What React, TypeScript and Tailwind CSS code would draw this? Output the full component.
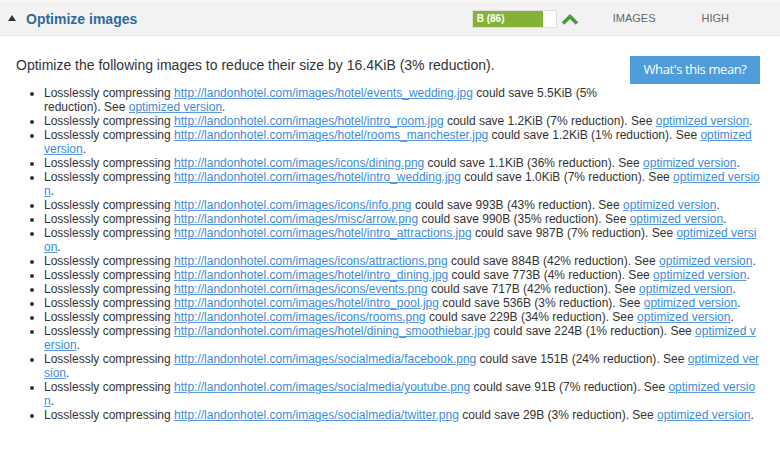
import React from 'react';

type Row = {
  url: string;
  save: string;
  cut?: number; // chars of "optimized version" on the first line
  textBreak?: boolean;
};

const LINK = 'optimized version';

const rows: Row[] = [
  { url: 'http://landonhotel.com/images/hotel/events_wedding.jpg', save: '5.5KiB (5% reduction)', textBreak: true },
  { url: 'http://landonhotel.com/images/hotel/intro_room.jpg', save: '1.2KiB (7% reduction)' },
  { url: 'http://landonhotel.com/images/hotel/rooms_manchester.jpg', save: '1.2KiB (1% reduction)', cut: 9 },
  { url: 'http://landonhotel.com/images/icons/dining.png', save: '1.1KiB (36% reduction)' },
  { url: 'http://landonhotel.com/images/hotel/intro_wedding.jpg', save: '1.0KiB (7% reduction)', cut: 16 },
  { url: 'http://landonhotel.com/images/icons/info.png', save: '993B (43% reduction)' },
  { url: 'http://landonhotel.com/images/misc/arrow.png', save: '990B (35% reduction)' },
  { url: 'http://landonhotel.com/images/hotel/intro_attractions.jpg', save: '987B (7% reduction)', cut: 15 },
  { url: 'http://landonhotel.com/images/icons/attractions.png', save: '884B (42% reduction)' },
  { url: 'http://landonhotel.com/images/hotel/intro_dining.jpg', save: '773B (4% reduction)' },
  { url: 'http://landonhotel.com/images/icons/events.png', save: '717B (42% reduction)' },
  { url: 'http://landonhotel.com/images/hotel/intro_pool.jpg', save: '536B (3% reduction)' },
  { url: 'http://landonhotel.com/images/icons/rooms.png', save: '229B (34% reduction)' },
  { url: 'http://landonhotel.com/images/hotel/dining_smoothiebar.jpg', save: '224B (1% reduction)', cut: 11 },
  { url: 'http://landonhotel.com/images/socialmedia/facebook.png', save: '151B (24% reduction)', cut: 13 },
  { url: 'http://landonhotel.com/images/socialmedia/youtube.png', save: '91B (7% reduction)', cut: 16 },
  { url: 'http://landonhotel.com/images/socialmedia/twitter.png', save: '29B (3% reduction)' },
];

const Link = ({ children }: { children: React.ReactNode }) => (
  <a href="#" className="text-[#3d8bd8] underline decoration-[#5a9be0]">
    {children}
  </a>
);

const Item = ({ row }: { row: Row }) => {
  const first = row.cut !== undefined ? LINK.slice(0, row.cut).trimEnd() : LINK;
  const rest = row.cut !== undefined ? LINK.slice(row.cut).trimStart() : '';

  if (row.textBreak) {
    const [num, ...words] = row.save.split(' ');
    return (
      <li className="whitespace-nowrap">
        Losslessly compressing <Link>{row.url}</Link> could save {num} {words[0]}
        <br />
        {words.slice(1).join(' ')}. See <Link>{LINK}</Link>.
      </li>
    );
  }

  return (
    <li className="whitespace-nowrap">
      Losslessly compressing <Link>{row.url}</Link> could save {row.save}. See{' '}
      <Link>
        {first}
        {rest && <br />}
        {rest}
      </Link>
      .
    </li>
  );
};

export default function App() {
  return (
    <div className="w-[780px] h-[452px] bg-white overflow-hidden font-['Liberation_Sans',Arial,sans-serif] text-[#333]">
      <div className="h-[2px] bg-[#f8f8f8]" />
      <div className="h-[34px] bg-[#f2f2f2] border-b border-[#e4e4e4] flex items-center">
        <svg width="8" height="6" viewBox="0 0 8 6" className="ml-[8px] mt-[-1px]">
          <path d="M4 0 L8 6 L0 6 Z" fill="#333" />
        </svg>
        <span className="ml-[10px] text-[14px] font-bold text-[#30689c] leading-none">Optimize images</span>
        <div className="ml-auto flex items-center">
          <div className="w-[85px] h-[18px] bg-white border border-[#e0e0e0] flex">
            <div className="w-[70px] h-full bg-[#84b136] flex items-center pl-[4px] text-[10px] font-bold text-white leading-none">
              B (86)
            </div>
          </div>
          <svg width="18" height="12" viewBox="0 0 18 12" className="ml-[4px]">
            <polyline points="2,10.5 9,3.5 16,10.5" fill="none" stroke="#4c9a3f" strokeWidth="3.6" />
          </svg>
          <span className="ml-[34px] text-[11px] text-[#666]">IMAGES</span>
          <span className="ml-[46px] mr-[51px] text-[11px] text-[#666]">HIGH</span>
        </div>
      </div>
      <div className="pl-[16px] pr-[20px] pt-[20px]">
        <button className="float-right w-[130px] h-[28px] bg-[#4f9cdb] text-white text-[13px] font-['Open_Sans',sans-serif] tracking-[-0.4px]">
          What's this mean?
        </button>
        <p className="text-[14px] leading-[18px]">
          Optimize the following images to reduce their size by 16.4KiB (3% reduction).
        </p>
        <ul className="mt-[12px] list-disc pl-[28px] text-[12px] leading-[14px]">
          {rows.map((r) => (
            <Item key={r.url} row={r} />
          ))}
        </ul>
      </div>
    </div>
  );
}
